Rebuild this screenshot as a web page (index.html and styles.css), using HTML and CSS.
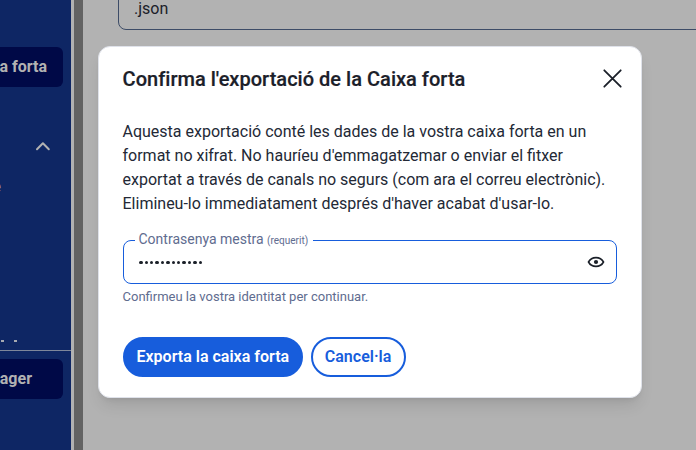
FILE: index.html
```html
<!DOCTYPE html>
<html lang="ca">
<head>
<meta charset="utf-8">
<title>Exporta la caixa forta</title>
<link rel="stylesheet" href="styles.css">
</head>
<body>
<div class="app">
  <nav class="sidebar">
    <div class="nav-top"><span class="nav-button">a forta</span></div>
    <div class="nav-group">
      <svg class="chevron" viewBox="0 0 16 10" width="16" height="10"><path d="M2 8.2 7.9 2.3 13.8 8.2"/></svg>
    </div>
    <div class="nav-item">e</div>
    <div class="nav-footer">
      <div class="nav-dots"><i></i><i></i></div>
      <span class="nav-button product">ager</span>
    </div>
  </nav>
  <div class="divider"></div>
  <main class="content"><div class="select">.json</div></main>
</div>
<section class="dialog" role="dialog">
  <header class="dialog-header">
    <h1>Confirma l'exportació de la Caixa forta</h1>
    <svg class="close" viewBox="0 0 20 20" width="20" height="20"><path d="M2.3 1.3 18.7 17.7M18.7 1.3 2.3 17.7"/></svg>
  </header>
  <p class="message">Aquesta exportació conté les dades de la vostra caixa forta en un<br>format no xifrat. No hauríeu d'emmagatzemar o enviar el fitxer<br>exportat a través de canals no segurs (com ara el correu electrònic).<br>Elimineu-lo immediatament després d'haver acabat d'usar-lo.</p>
  <div class="field">
    <label class="label">Contrasenya mestra <small>(requerit)</small></label>
    <div class="dots"><i></i><i></i><i></i><i></i><i></i><i></i><i></i><i></i><i></i><i></i><i></i><i></i></div>
    <svg class="eye" viewBox="0 0 18 12" width="18" height="12"><path d="M1.5 6C3.1 3 5.7 1.6 9 1.6S14.9 3 16.5 6C14.9 9 12.3 10.4 9 10.4S3.1 9 1.5 6Z"/><circle cx="9" cy="6" r="2.1"/></svg>
  </div>
  <p class="hint">Confirmeu la vostra identitat per continuar.</p>
  <footer class="actions">
    <button class="btn primary">Exporta la caixa forta</button>
    <button class="btn">Cancel·la</button>
  </footer>
</section>
</body>
</html>
```
FILE: styles.css
```css
* { box-sizing: border-box; }
body {
  margin: 0;
  height: 450px;
  overflow: hidden;
  position: relative;
  background: #b2b2b2;
  color: #1b2029;
  font: 16px/24px Roboto, sans-serif;
}
.app { display: flex; height: 450px; }
.sidebar {
  width: 71px;
  background: #0e2664;
  color: #b2b2b2;
  display: flex;
  flex-direction: column;
}
.nav-top { padding-top: 47px; }
.nav-button {
  display: flex;
  align-items: center;
  justify-content: flex-end;
  width: 63px;
  height: 40px;
  padding-right: 16px;
  border-radius: 0 6px 6px 0;
  background: #000947;
  font-weight: 700;
  white-space: nowrap;
}
.nav-group { display: flex; justify-content: flex-end; padding: 54px 20px 0 0; }
.chevron { fill: none; stroke: #b2b2b2; stroke-width: 2; stroke-linecap: round; stroke-linejoin: round; }
.nav-item { width: 1px; margin-top: 24px; display: flex; justify-content: flex-end; }
.nav-footer { margin-top: auto; height: 110px; }
.nav-dots { display: flex; gap: 10px; height: 11px; padding-left: 1px; border-bottom: 1px solid #7e879b; margin-bottom: 8px; }
.nav-dots i { width: 3px; height: 2px; background: #a6a9b1; }
.product { padding-right: 31px; }
.divider { width: 9px; margin-left: 3px; background: #636363; }
.content { flex: 1; padding-left: 35px; overflow: hidden; }
.select {
  height: 42px;
  margin-top: -12px;
  width: 620px;
  padding: 8px 15px;
  border: 1px solid #3d4c67;
  border-radius: 8px;
}
.dialog {
  position: absolute;
  left: 98px;
  top: 46px;
  width: 544px;
  height: 352px;
  padding: 20px 24px;
  border: 1px solid #dfe2ea;
  border-radius: 12px;
  background: #fff;
  box-shadow: 0 10px 15px -3px #0000001a, 0 4px 6px -4px #0000001a;
}
.dialog-header { display: flex; align-items: center; justify-content: space-between; height: 24px; margin: 0 -5px 0 -.4px; }
h1 { margin: 0; font-size: 20px; line-height: 24px; font-weight: 500; letter-spacing: .02px; -webkit-text-stroke: .2px; }
.close { fill: none; stroke: #1b2029; stroke-width: 1.8; stroke-linecap: round; }
.message { margin: 29px 0 0 -.5px; white-space: nowrap; color: #232936; }
.field {
  display: flex;
  align-items: center;
  justify-content: space-between;
  position: relative;
  height: 44px;
  margin-top: 24px;
  padding: 0 11px 0 15.3px;
  border: 1px solid #175ddc;
  border-radius: 8px;
}
.label {
  position: absolute;
  left: 11px;
  top: -12px;
  padding: 0 4.5px 0 3.5px;
  background: #fff;
  color: #606c8f;
  font-size: 14px;
  line-height: 20px;
  white-space: nowrap;
}
small { font-size: 10px; }
.dots { display: flex; gap: 2px; padding-top: 1px; }
.dots i { width: 3.4px; height: 3.4px; border-radius: 50%; background: #1b2029; }
.eye path { fill: none; stroke: #1b2029; stroke-width: 1.6; }
.eye circle { fill: #1b2029; }
.hint { margin: 5px 0 0 -.5px; color: #606c8f; font-size: 13px; line-height: 16px; }
.actions { display: flex; gap: 8px; margin-top: 32px; }
.btn {
  height: 40px;
  padding: 0 12.2px;
  border: 2px solid #175ddc;
  border-radius: 20px;
  background: #fff;
  color: #175ddc;
  font: 600 16px/24px Roboto, sans-serif;
  white-space: nowrap;
}
.primary { padding: 0 11.5px; background: #175ddc; color: #fff; }
```
